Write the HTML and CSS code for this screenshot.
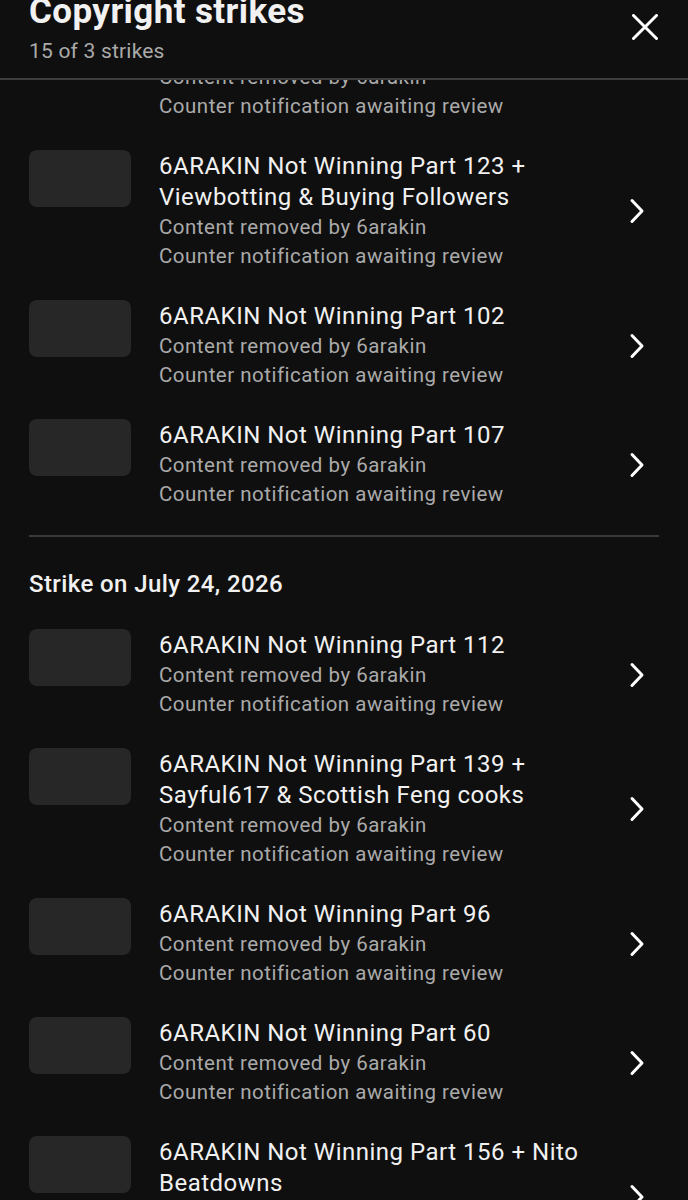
FILE: index.html
```html
<!DOCTYPE html>
<html lang="en">
<head>
    <meta charset="UTF-8">
    <meta name="viewport" content="width=device-width, initial-scale=1.0">
    <title>Copyright strikes</title>
    <link rel="stylesheet" href="styles.css">
</head>
<body>
    <header class="sheet-header">
        <div class="header-text">
            <h1>Copyright strikes</h1>
            <p class="header-sub">15 of 3 strikes</p>
        </div>
        <button class="close-btn" aria-label="Close">
            <svg width="26" height="26" viewBox="0 0 26 26"><path d="M1.5 1.5 L24.5 24.5 M24.5 1.5 L1.5 24.5" stroke="#fff" stroke-width="3" stroke-linecap="round"/></svg>
        </button>
    </header>

    <div class="sheet-body">
        <div class="strike-list">
            <div class="strike-group">
                <div class="strike-item">
                    <div class="thumb"></div>
                    <div class="item-text">
                        <div class="item-title">6ARAKIN Not Winning Part 118 + Hidden Title Line</div>
                        <div class="item-sub">Content removed by 6arakin</div>
                        <div class="item-sub">Counter notification awaiting review</div>
                    </div>
                    <div class="chevron"><svg width="16" height="26" viewBox="0 0 16 26"><path d="M3 2.5 L13 13 L3 23.5" fill="none" stroke="#fff" stroke-width="3" stroke-linecap="round" stroke-linejoin="round"/></svg></div>
                </div>
                <div class="strike-item">
                    <div class="thumb"></div>
                    <div class="item-text">
                        <div class="item-title">6ARAKIN Not Winning Part 123 + Viewbotting &amp; Buying Followers</div>
                        <div class="item-sub">Content removed by 6arakin</div>
                        <div class="item-sub">Counter notification awaiting review</div>
                    </div>
                    <div class="chevron"><svg width="16" height="26" viewBox="0 0 16 26"><path d="M3 2.5 L13 13 L3 23.5" fill="none" stroke="#fff" stroke-width="3" stroke-linecap="round" stroke-linejoin="round"/></svg></div>
                </div>
                <div class="strike-item">
                    <div class="thumb"></div>
                    <div class="item-text">
                        <div class="item-title">6ARAKIN Not Winning Part 102</div>
                        <div class="item-sub">Content removed by 6arakin</div>
                        <div class="item-sub">Counter notification awaiting review</div>
                    </div>
                    <div class="chevron"><svg width="16" height="26" viewBox="0 0 16 26"><path d="M3 2.5 L13 13 L3 23.5" fill="none" stroke="#fff" stroke-width="3" stroke-linecap="round" stroke-linejoin="round"/></svg></div>
                </div>
                <div class="strike-item">
                    <div class="thumb"></div>
                    <div class="item-text">
                        <div class="item-title">6ARAKIN Not Winning Part 107</div>
                        <div class="item-sub">Content removed by 6arakin</div>
                        <div class="item-sub">Counter notification awaiting review</div>
                    </div>
                    <div class="chevron"><svg width="16" height="26" viewBox="0 0 16 26"><path d="M3 2.5 L13 13 L3 23.5" fill="none" stroke="#fff" stroke-width="3" stroke-linecap="round" stroke-linejoin="round"/></svg></div>
                </div>
            </div>

            <hr class="divider">

            <div class="strike-group">
                <h2 class="group-title">Strike on July 24, 2026</h2>
                <div class="strike-item">
                    <div class="thumb"></div>
                    <div class="item-text">
                        <div class="item-title">6ARAKIN Not Winning Part 112</div>
                        <div class="item-sub">Content removed by 6arakin</div>
                        <div class="item-sub">Counter notification awaiting review</div>
                    </div>
                    <div class="chevron"><svg width="16" height="26" viewBox="0 0 16 26"><path d="M3 2.5 L13 13 L3 23.5" fill="none" stroke="#fff" stroke-width="3" stroke-linecap="round" stroke-linejoin="round"/></svg></div>
                </div>
                <div class="strike-item">
                    <div class="thumb"></div>
                    <div class="item-text">
                        <div class="item-title">6ARAKIN Not Winning Part 139 + Sayful617 &amp; Scottish Feng cooks</div>
                        <div class="item-sub">Content removed by 6arakin</div>
                        <div class="item-sub">Counter notification awaiting review</div>
                    </div>
                    <div class="chevron"><svg width="16" height="26" viewBox="0 0 16 26"><path d="M3 2.5 L13 13 L3 23.5" fill="none" stroke="#fff" stroke-width="3" stroke-linecap="round" stroke-linejoin="round"/></svg></div>
                </div>
                <div class="strike-item">
                    <div class="thumb"></div>
                    <div class="item-text">
                        <div class="item-title">6ARAKIN Not Winning Part 96</div>
                        <div class="item-sub">Content removed by 6arakin</div>
                        <div class="item-sub">Counter notification awaiting review</div>
                    </div>
                    <div class="chevron"><svg width="16" height="26" viewBox="0 0 16 26"><path d="M3 2.5 L13 13 L3 23.5" fill="none" stroke="#fff" stroke-width="3" stroke-linecap="round" stroke-linejoin="round"/></svg></div>
                </div>
                <div class="strike-item">
                    <div class="thumb"></div>
                    <div class="item-text">
                        <div class="item-title">6ARAKIN Not Winning Part 60</div>
                        <div class="item-sub">Content removed by 6arakin</div>
                        <div class="item-sub">Counter notification awaiting review</div>
                    </div>
                    <div class="chevron"><svg width="16" height="26" viewBox="0 0 16 26"><path d="M3 2.5 L13 13 L3 23.5" fill="none" stroke="#fff" stroke-width="3" stroke-linecap="round" stroke-linejoin="round"/></svg></div>
                </div>
                <div class="strike-item">
                    <div class="thumb"></div>
                    <div class="item-text">
                        <div class="item-title">6ARAKIN Not Winning Part 156 + Nito Beatdowns</div>
                        <div class="item-sub">Content removed by 6arakin</div>
                        <div class="item-sub">Counter notification awaiting review</div>
                    </div>
                    <div class="chevron"><svg width="16" height="26" viewBox="0 0 16 26"><path d="M3 2.5 L13 13 L3 23.5" fill="none" stroke="#fff" stroke-width="3" stroke-linecap="round" stroke-linejoin="round"/></svg></div>
                </div>
            </div>
        </div>
    </div>
</body>
</html>
```

FILE: styles.css
```css
html, body {
    height: 100%;
    overflow: hidden;
}

body {
    margin: 0;
    padding: 0;
    background-color: #0f0f0f;
    color: #f1f1f1;
    font-family: Roboto, "Liberation Sans", Arial, sans-serif;
    display: flex;
    flex-direction: column;
}

.sheet-header {
    height: 78px;
    flex: none;
    display: flex;
    justify-content: space-between;
    align-items: flex-start;
    padding: 0 29px;
    border-bottom: 2px solid #3d3d3d;
    background-color: #0f0f0f;
}

.header-text h1 {
    margin: -8px 0 0 0;
    font-size: 35px;
    line-height: 40px;
    font-weight: 700;
    letter-spacing: 0.4px;
    color: #f1f1f1;
}

.header-sub {
    margin: 6px 0 0 0;
    font-size: 21px;
    line-height: 26px;
    letter-spacing: 0.2px;
    color: #aaaaaa;
}

.close-btn {
    background: none;
    border: none;
    padding: 0;
    margin: 14px 1px 0 0;
    width: 26px;
    height: 26px;
    cursor: pointer;
}

.sheet-body {
    flex: 1;
    overflow: hidden;
}

.strike-list {
    margin-top: -79px;
}

.strike-group {
    display: flex;
    flex-direction: column;
    gap: 30px;
}

.strike-item {
    display: flex;
    align-items: flex-start;
    padding: 0 43px 0 29px;
}

.thumb {
    flex: none;
    width: 102px;
    height: 57px;
    margin-top: -1px;
    border-radius: 8px;
    background-color: #272727;
}

.item-text {
    flex: 1;
    min-width: 0;
    margin-left: 28px;
    margin-right: 18px;
}

.item-title {
    font-size: 24px;
    line-height: 31px;
    letter-spacing: 0.5px;
    color: #f1f1f1;
}

.item-sub {
    font-size: 20.5px;
    line-height: 29px;
    letter-spacing: 0.5px;
    color: #aaaaaa;
}

.chevron {
    flex: none;
    align-self: center;
    width: 16px;
    height: 26px;
}

.divider {
    margin: 26px 29px 0 29px;
    border: none;
    border-top: 2px solid #3a3a3a;
}

.group-title {
    margin: 32px 29px 1px 29px;
    font-size: 24px;
    line-height: 30px;
    font-weight: 500;
    letter-spacing: 0.4px;
    color: #f1f1f1;
}
```
